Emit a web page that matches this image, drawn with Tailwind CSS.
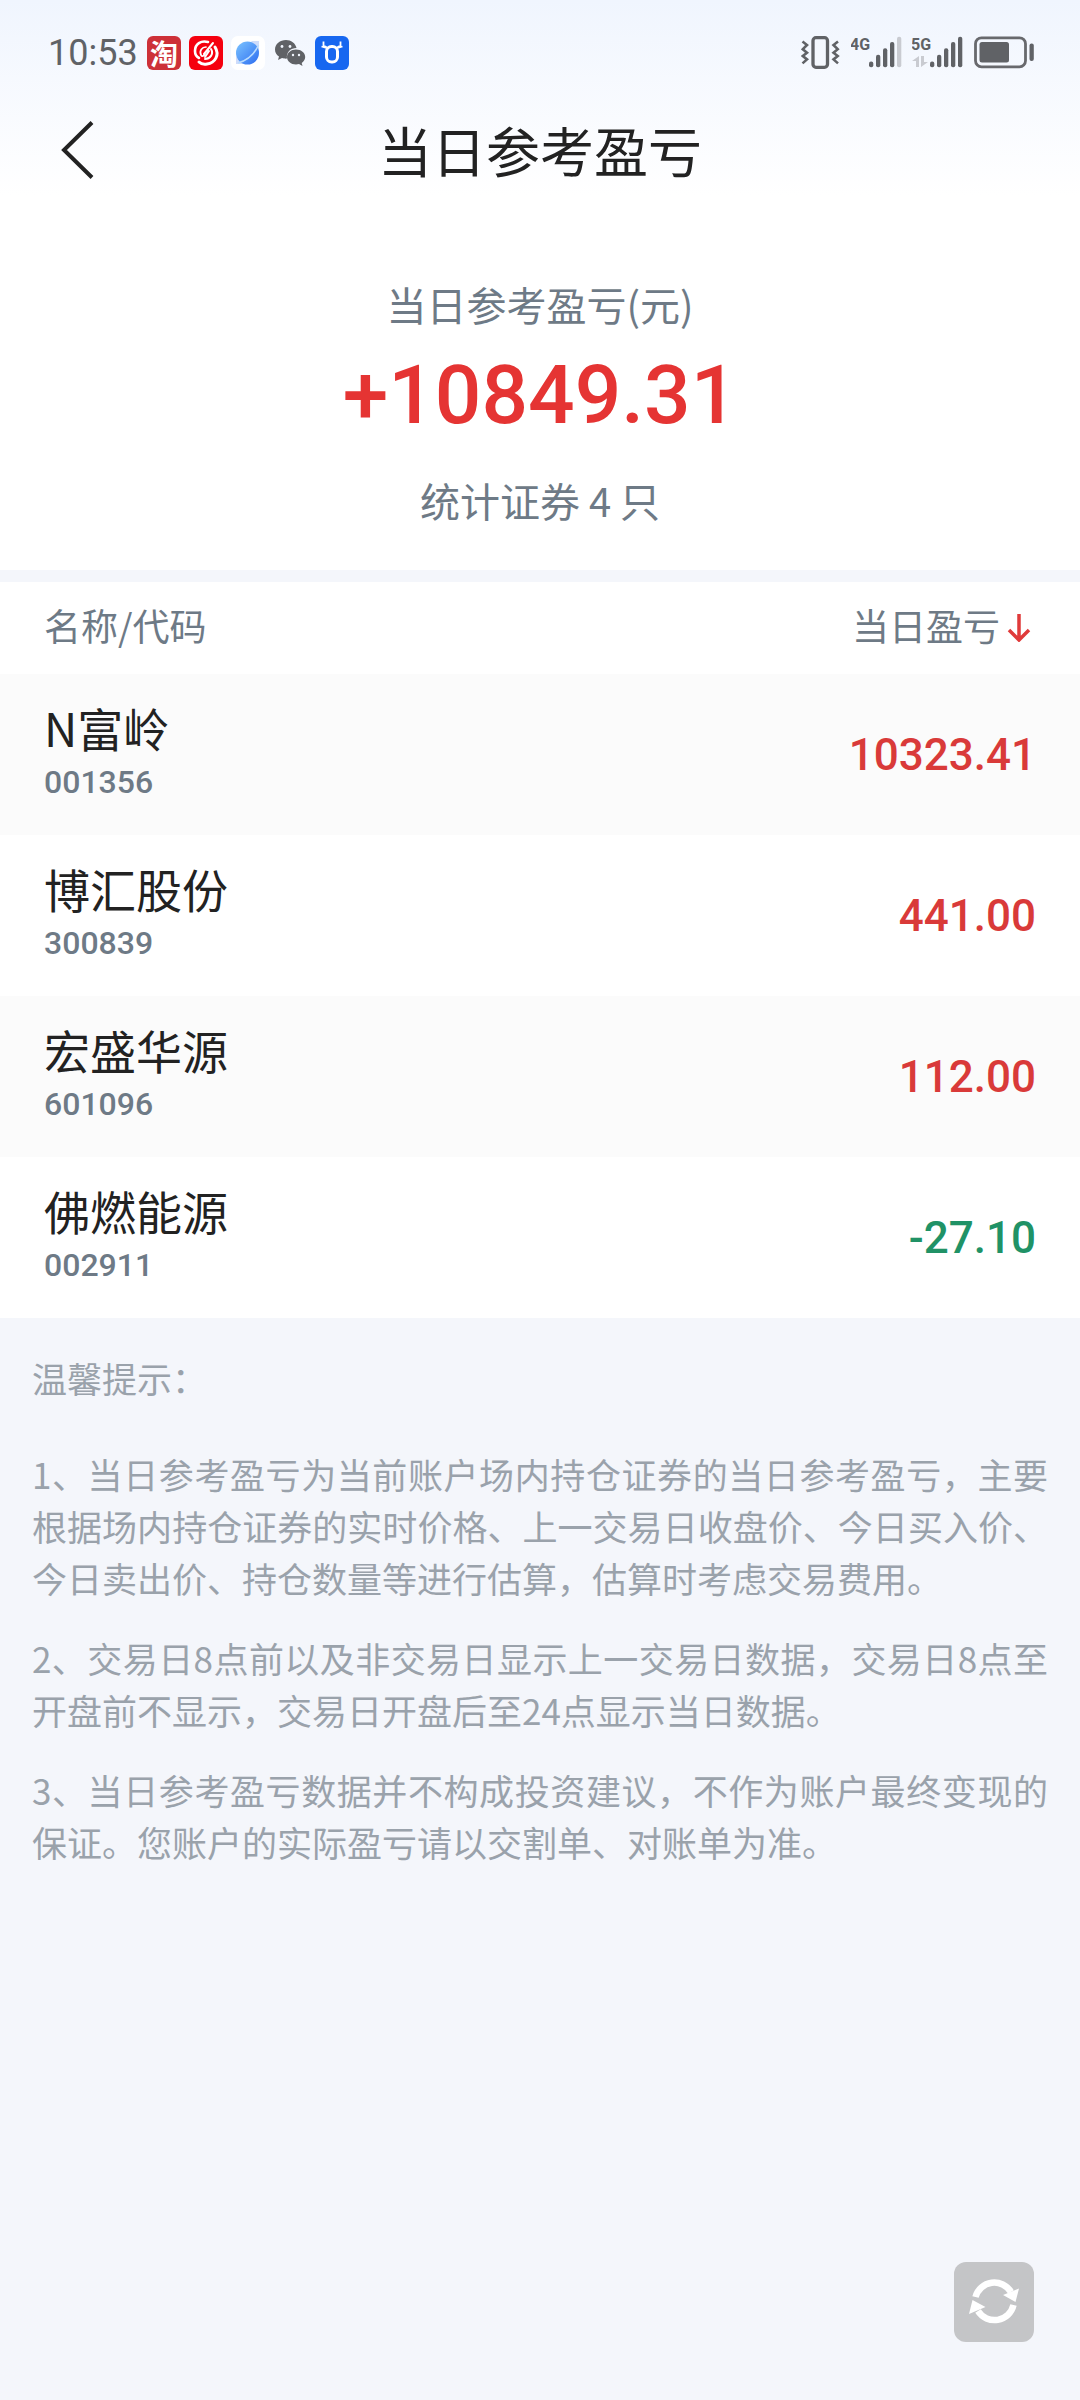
<!DOCTYPE html>
<html lang="zh-CN">
<head>
<meta charset="utf-8">
<meta name="viewport" content="width=device-width, initial-scale=1">
<title>当日参考盈亏</title>
<script src="https://cdn.jsdelivr.net/npm/@tailwindcss/browser@4"></script>
</head>
<body class="flex min-h-screen flex-col bg-[#f4f6fb] font-['Noto_Sans_CJK_SC',sans-serif] text-[#222222]">

<div class="bg-linear-to-b from-[#f0f5fe] to-white">
  <!-- Status bar -->
  <div class="flex h-[104px] items-center justify-between pt-0.5 pr-[45px] pl-12 text-[#606266]">
    <div class="flex items-center gap-2">
      <span class="w-[91px] font-['Roboto',sans-serif] text-[36px] leading-[34px]">10:53</span>
      <span class="flex size-[34px] items-center justify-center rounded-md bg-[#cd3038] text-[28px] leading-none font-bold text-white">淘</span>
      <svg class="size-[34px]" viewBox="0 0 34 34" fill="none" stroke="#fff" stroke-linecap="round">
        <rect width="34" height="34" rx="6" fill="#f5000f" stroke="none"/>
        <path d="M19 6C12 4 6 8 6 15c0 4 2 6 4 7" stroke-width="2.600"/>
        <path d="M17 11c-4 0-7 4-5 8 1 2 3 1 4-1" stroke-width="1.700"/>
        <path d="M26 11c5 8 0 16-8 17-3 .5-6 0-8-2" stroke-width="3"/>
        <path d="M22 13c3 5-1 10-6 10" stroke-width="2"/>
        <path d="M24 7l-9 11M20 15l-4 6" stroke-width="2"/>
      </svg>
      <svg class="size-[34px]" viewBox="0 0 34 34">
        <defs><linearGradient id="globe" x1="0" y1="0" x2="1" y2="1"><stop offset="0" stop-color="#7cc4ff"/><stop offset="1" stop-color="#2d6df0"/></linearGradient></defs>
        <rect width="34" height="34" rx="7" fill="#fff"/>
        <path d="M20 5h8v9zM5 20v8h9z" fill="#cfdcfa"/>
        <circle cx="16.500" cy="17" r="11.500" fill="url(#globe)"/>
        <path d="M27.500 9C24 17 17 24 7 27" fill="none" stroke="#b9dcff" stroke-width="1.600"/>
      </svg>
      <svg class="size-[34px]" viewBox="0 0 34 34">
        <path d="M13 4C7 4 2 8 2 13.500c0 3 1.500 5.500 4 7L5 24l4-2c2 .6 3 .7 5 .6C13 16 18 12 23.500 12 22.500 7 18 4 13 4z" fill="#606266"/>
        <path d="M23 13.500c-5 0-9 3.400-9 7.500s4 7.500 9 7.500c1 0 2-.1 3-.4l3.500 1.800-.8-3c2.100-1.400 3.500-3.500 3.500-5.900 0-4.100-4-7.500-9.200-7.500z" fill="#606266"/>
        <g fill="#f2f6fe"><circle cx="9" cy="10.500" r="1.400"/><circle cx="17" cy="10.500" r="1.400"/><circle cx="20" cy="19" r="1.200"/><circle cx="26" cy="19" r="1.200"/></g>
      </svg>
      <svg class="size-[34px]" viewBox="0 0 34 34" fill="none" stroke="#fff">
        <rect width="34" height="34" rx="6" fill="#1767f0" stroke="none"/>
        <rect x="11.500" y="10.500" width="11" height="15.500" rx="5" stroke-width="3"/>
        <path d="M8.500 5.500v4l3.500 2M25.500 5.500v4l-3.500 2M6.500 10.500l5 1.500M27.500 10.500l-5 1.500" stroke-width="1.800"/>
      </svg>
    </div>
    <div class="flex items-center gap-[10px]">
      <svg class="h-[34px] w-10" viewBox="0 0 40 34" fill="none" stroke="#606266">
        <rect x="12" y="1.700" width="14.500" height="29.600" rx="3" stroke-width="3.300"/>
        <path d="M1.500 5.500L6 9l-4.200 4.200L6 16.700l-4.200 3.300L6 23.400l-4.500 4M37 5.500L32.500 9l4.200 4.200-4.200 3.500 4.200 3.300-4.200 3.400 4.500 4" stroke-width="2.600"/>
      </svg>
      <svg class="h-[34px] w-[51px]" viewBox="0 0 51 34" fill="#606266">
        <text x="-1" y="14" class="font-['Roboto',sans-serif] text-[16px] font-bold">4G</text>
        <rect x="18" y="25.500" width="4.300" height="5.800" rx="2"/><rect x="25" y="18.700" width="4.300" height="12.600" rx="2"/><rect x="32" y="12.300" width="4.300" height="19" rx="2"/><rect x="39" y="6" width="4.300" height="25.300" rx="2"/><rect x="46" y=".7" width="4.300" height="30.600" rx="2" fill="#c9cbd1"/>
      </svg>
      <svg class="h-[34px] w-[51px]" viewBox="0 0 51 34" fill="#606266">
        <text x="-1" y="14" class="font-['Roboto',sans-serif] text-[16px] font-bold">5G</text>
        <path d="M7 20v11H4v-6H0zM9 31V20h3v6h4z" fill="#c9cbd1"/>
        <rect x="18" y="25.500" width="4.300" height="5.800" rx="2"/><rect x="25" y="18.700" width="4.300" height="12.600" rx="2"/><rect x="32" y="12.300" width="4.300" height="19" rx="2"/><rect x="39" y="6" width="4.300" height="25.300" rx="2"/><rect x="46" y=".7" width="4.300" height="30.600" rx="2"/>
      </svg>
      <svg class="h-[34px] w-[62px]" viewBox="0 0 62 34">
        <rect x="2.500" y="1.800" width="50" height="29" rx="6" fill="none" stroke="#68696d" stroke-width="2.800"/>
        <rect x="6.500" y="6" width="29.500" height="20.500" rx="2.500" fill="#606266"/>
        <rect x="56.500" y="7.500" width="4.300" height="17.500" rx="2" fill="#606266"/>
      </svg>
    </div>
  </div>

  <!-- Title bar -->
  <header class="grid h-[92px] grid-cols-[1fr_auto_1fr] items-center px-[60px]">
    <button type="button" aria-label="返回" class="justify-self-start">
      <svg class="h-[58px] w-9" viewBox="0 0 36 58" fill="none" stroke="#222" stroke-width="4"><path d="M32 1.500L4 29l28 27.500"/></svg>
    </button>
    <h1 class="text-[54px] leading-[92px]">当日参考盈亏</h1>
  </header>
</div>

<main>
  <section class="border-b-12 border-[#f4f6fb] bg-white pt-[78px] pb-10 text-center text-[40px] leading-[60px] text-[#6e7a86]">
    <h2>当日参考盈亏(元)</h2>
    <p class="mt-1 font-['Roboto',sans-serif] text-[82px] leading-[114px] font-medium text-[#e53433]">+10849.31</p>
    <p class="mt-[18px]">统计证券 4 只</p>
  </section>

  <table class="w-full bg-white">
    <thead class="text-[37px] text-[#6e7a86]">
      <tr class="h-[92px]">
        <th scope="col" class="pb-1 pl-11 text-left font-normal">名称/代码</th>
        <th scope="col" class="pr-11 pb-1 text-right font-normal">
          <button type="button" class="inline-flex items-center gap-1">当日盈亏<svg class="mt-1 h-7 w-8" viewBox="0 0 32 28" fill="none" stroke="#e03a3a" stroke-width="3.500"><path d="M15 0v26M5 16l10 10 10-10"/></svg></button>
        </th>
      </tr>
    </thead>
    <tbody>
      <tr class="bg-[#fbfbfb]">
        <td class="pt-[26px] pb-7 pl-11"><div class="text-[46px] leading-[54px]">N富岭</div><div class="mt-1 font-['Roboto',sans-serif] text-[32px] leading-[49px] font-medium text-[#6e7a86]">001356</div></td>
        <td class="pr-11 text-right font-['Roboto',sans-serif] text-[44px] font-medium text-[#d93a39]">10323.41</td>
      </tr>
      <tr>
        <td class="pt-[26px] pb-7 pl-11"><div class="text-[46px] leading-[54px]">博汇股份</div><div class="mt-1 font-['Roboto',sans-serif] text-[32px] leading-[49px] font-medium text-[#6e7a86]">300839</div></td>
        <td class="pr-11 text-right font-['Roboto',sans-serif] text-[44px] font-medium text-[#d93a39]">441.00</td>
      </tr>
      <tr class="bg-[#fbfbfb]">
        <td class="pt-[26px] pb-7 pl-11"><div class="text-[46px] leading-[54px]">宏盛华源</div><div class="mt-1 font-['Roboto',sans-serif] text-[32px] leading-[49px] font-medium text-[#6e7a86]">601096</div></td>
        <td class="pr-11 text-right font-['Roboto',sans-serif] text-[44px] font-medium text-[#d93a39]">112.00</td>
      </tr>
      <tr>
        <td class="pt-[26px] pb-7 pl-11"><div class="text-[46px] leading-[54px]">佛燃能源</div><div class="mt-1 font-['Roboto',sans-serif] text-[32px] leading-[49px] font-medium text-[#6e7a86]">002911</div></td>
        <td class="pr-11 text-right font-['Roboto',sans-serif] text-[44px] font-medium text-[#209266]">-27.10</td>
      </tr>
    </tbody>
  </table>

  <section class="flex flex-col gap-7 px-8 pt-[34px] pb-40 text-justify text-[35px] leading-[52px] text-[#9aa2ab]">
    <h2 class="mb-4">温馨提示：</h2>
    <p>1、当日参考盈亏为当前账户场内持仓证券的当日参考盈亏，主要根据场内持仓证券的实时价格、上一交易日收盘价、今日买入价、今日卖出价、持仓数量等进行估算，估算时考虑交易费用。</p>
    <p>2、交易日8点前以及非交易日显示上一交易日数据，交易日8点至开盘前不显示，交易日开盘后至24点显示当日数据。</p>
    <p>3、当日参考盈亏数据并不构成投资建议，不作为账户最终变现的保证。您账户的实际盈亏请以交割单、对账单为准。</p>
  </section>
</main>

<button type="button" aria-label="刷新" class="fixed right-[46px] bottom-[58px] size-20 rounded-xl bg-[#c4c5c7]">
  <svg class="size-20" viewBox="0 0 80 80" fill="none" stroke="#fff" stroke-width="6.500">
    <path d="M21.500 35A19.500 19.500 0 0 1 57 30"/>
    <path d="M59.500 43A19.500 19.500 0 0 1 24 49"/>
    <path d="M65 26.500L61.500 40 49 33zM15 52l3.500-14L31.500 45z" fill="#fff" stroke="none"/>
  </svg>
</button>
</body>
</html>
